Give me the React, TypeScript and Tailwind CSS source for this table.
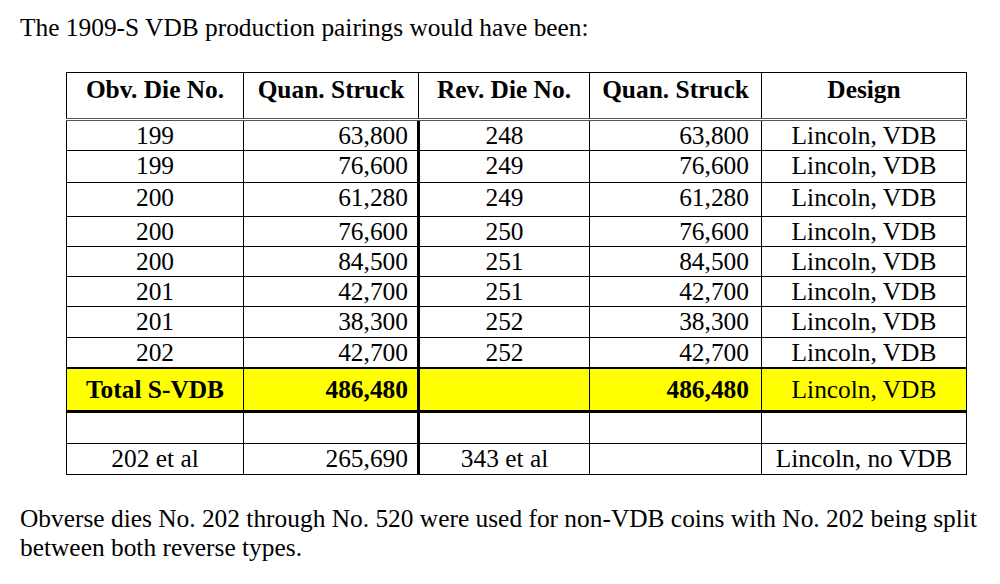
import React from 'react';

type Row = {
  obv: string;
  obvQty: string;
  rev: string;
  revQty: string;
  design: string;
  h: number;
};

const ROWS: Row[] = [
  { obv: '199', obvQty: '63,800', rev: '248', revQty: '63,800', design: 'Lincoln, VDB', h: 31 },
  { obv: '199', obvQty: '76,600', rev: '249', revQty: '76,600', design: 'Lincoln, VDB', h: 32 },
  { obv: '200', obvQty: '61,280', rev: '249', revQty: '61,280', design: 'Lincoln, VDB', h: 34 },
  { obv: '200', obvQty: '76,600', rev: '250', revQty: '76,600', design: 'Lincoln, VDB', h: 30 },
  { obv: '200', obvQty: '84,500', rev: '251', revQty: '84,500', design: 'Lincoln, VDB', h: 30 },
  { obv: '201', obvQty: '42,700', rev: '251', revQty: '42,700', design: 'Lincoln, VDB', h: 30 },
  { obv: '201', obvQty: '38,300', rev: '252', revQty: '38,300', design: 'Lincoln, VDB', h: 31 },
  { obv: '202', obvQty: '42,700', rev: '252', revQty: '42,700', design: 'Lincoln, VDB', h: 30 },
];

const cell = 'border border-black p-0 align-top leading-[29px]';
const total = 'border border-black border-t-2 border-b-[3px] p-0 align-middle leading-[29px]';

export default function App() {
  return (
    <div className="w-[1000px] h-[584px] bg-white text-black font-['Liberation_Serif',serif] text-[25.4px] overflow-hidden">
      <p className="pt-[13px] pl-[20px] leading-[29px]">The 1909-S VDB production pairings would have been:</p>

      <table className="mt-[30px] ml-[66px] w-[900px] table-fixed border-collapse border border-[#333]">
        <colgroup>
          <col className="w-[177px]" />
          <col className="w-[175px]" />
          <col className="w-[171px]" />
          <col className="w-[172px]" />
          <col className="w-[205px]" />
        </colgroup>
        <thead>
          <tr className="h-[47px]">
            {['Obv. Die No.', 'Quan. Struck', 'Rev. Die No.', 'Quan. Struck', 'Design'].map((label, i) => (
              <th
                key={i}
                className="border border-black border-b-[3px] border-b-[#555] border-double p-0 pt-[2px] align-top font-bold text-center leading-[29px]"
              >
                {label}
              </th>
            ))}
          </tr>
        </thead>
        <tbody>
          {ROWS.map((r, i) => (
            <tr key={i} style={{ height: r.h }}>
              <td className={`${cell} text-center`}>{r.obv}</td>
              <td className={`${cell} border-r-[3px] text-right pr-[9px]`}>{r.obvQty}</td>
              <td className={`${cell} text-center`}>{r.rev}</td>
              <td className={`${cell} text-right pr-[12px]`}>{r.revQty}</td>
              <td className={`${cell} text-center`}>{r.design}</td>
            </tr>
          ))}

          <tr className="h-[43px] bg-[#ffff00]">
            <td className={`${total} text-center font-bold`}>Total S-VDB</td>
            <td className={`${total} border-r-[3px] text-right pr-[9px] font-bold`}>486,480</td>
            <td className={total}></td>
            <td className={`${total} text-right pr-[12px] font-bold`}>486,480</td>
            <td className={`${total} text-center`}>Lincoln, VDB</td>
          </tr>

          <tr className="h-[32px]">
            <td className={cell}></td>
            <td className={`${cell} border-r-[3px]`}></td>
            <td className={cell}></td>
            <td className={cell}></td>
            <td className={cell}></td>
          </tr>

          <tr className="h-[31px]">
            <td className={`${cell} text-center`}>202 et al</td>
            <td className={`${cell} border-r-[3px] text-right pr-[9px]`}>265,690</td>
            <td className={`${cell} text-center`}>343 et al</td>
            <td className={cell}></td>
            <td className={`${cell} text-center`}>Lincoln, no VDB</td>
          </tr>
        </tbody>
      </table>

      <p className="mt-[29px] pl-[20px] leading-[29px]">
        Obverse dies No. 202 through No. 520 were used for non-VDB coins with No. 202 being split
        <br />
        between both reverse types.
      </p>
    </div>
  );
}
